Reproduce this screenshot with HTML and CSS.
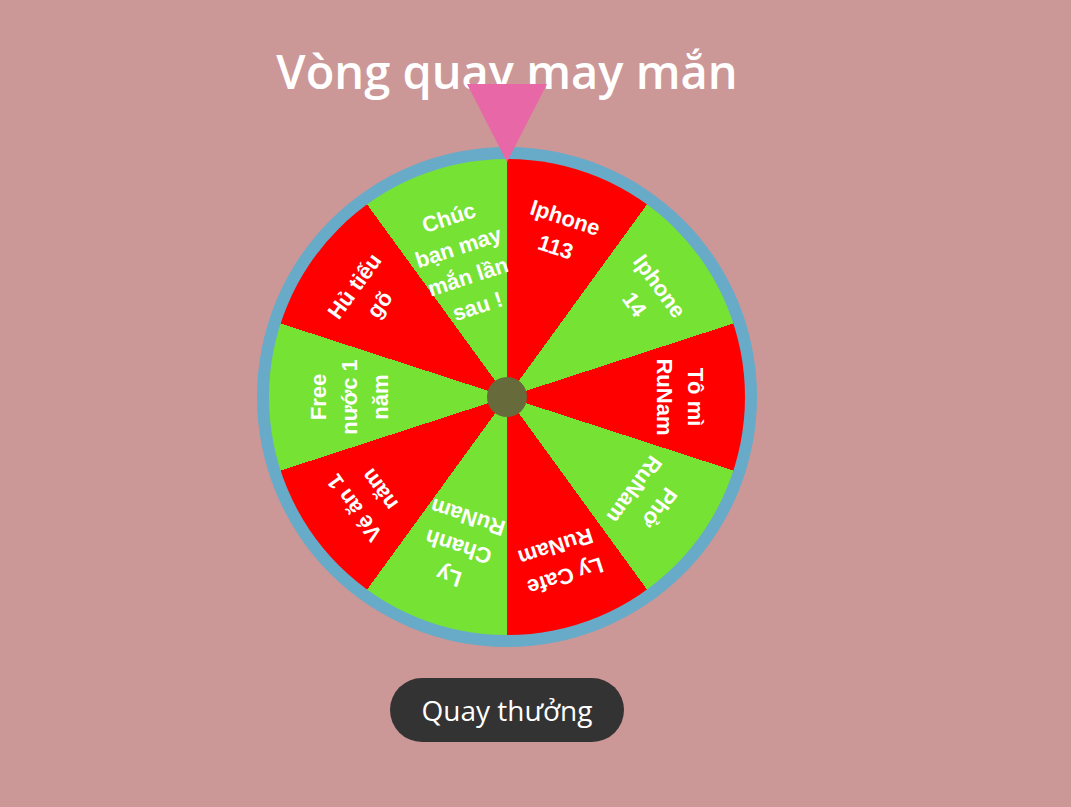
FILE: index.html
```html
<!DOCTYPE html>
<html lang="vi">
<head>
<meta charset="utf-8">
<title>Vòng quay may mắn</title>
<link rel="stylesheet" href="styles.css">
</head>
<body>
<main class="page">
  <h1 class="title">Vòng quay may mắn</h1>
  <div class="wheel-wrap">
    <div class="pointer"></div>
    <div class="wheel">
      <div class="label" style="--a:18deg">Iphone 113</div>
      <div class="label" style="--a:54deg">Iphone 14</div>
      <div class="label" style="--a:90deg">Tô mì RuNam</div>
      <div class="label" style="--a:126deg">Phở RuNam</div>
      <div class="label" style="--a:162deg">Ly Cafe RuNam</div>
      <div class="label" style="--a:198deg">Ly Chanh RuNam</div>
      <div class="label" style="--a:234deg">Vé ăn 1 năm</div>
      <div class="label" style="--a:270deg">Free nước 1 năm</div>
      <div class="label" style="--a:306deg">Hủ tiếu gõ</div>
      <div class="label" style="--a:342deg">Chúc bạn may mắn lần sau !</div>
      <div class="hub"></div>
    </div>
  </div>
  <button class="spin-btn" type="button">Quay thưởng</button>
</main>
</body>
</html>
```
FILE: styles.css
```css
html, body {
  margin: 0;
  padding: 0;
  background: #cc9797;
  min-height: 100%;
}

body {
  height: 807px;
  overflow: hidden;
}

.page {
  width: 1014px;
  display: flex;
  flex-direction: column;
  align-items: center;
}

.title {
  margin: 0 0 44px;
  padding-top: 39px;
  font-family: "Open Sans", "Noto Sans", sans-serif;
  font-weight: 600;
  font-size: 47px;
  line-height: 64px;
  color: #ffffff;
}

.wheel-wrap {
  position: relative;
  width: 500px;
  height: 500px;
  border-radius: 50%;
  background: #67abc8;
  padding: 12px;
  box-sizing: border-box;
}

.pointer {
  position: absolute;
  top: -63px;
  left: 50%;
  margin-left: -40px;
  width: 80px;
  height: 78px;
  background: #e867a7;
  clip-path: polygon(0 0, 100% 0, 50% 100%);
  z-index: 2;
}

.wheel {
  position: relative;
  width: 476px;
  height: 476px;
  border-radius: 50%;
  overflow: hidden;
  background: repeating-conic-gradient(from 0deg, #ff0000 0deg 36deg, #76e234 36deg 72deg);
}

.label {
  position: absolute;
  top: 0;
  left: 50%;
  width: 96px;
  margin-left: -48px;
  height: 238px;
  box-sizing: border-box;
  padding-top: 34px;
  transform-origin: 50% 100%;
  transform: rotate(var(--a));
  font-family: "Liberation Sans", Arial, sans-serif;
  font-weight: 700;
  font-size: 22px;
  line-height: 31px;
  color: #ffffff;
  text-align: center;
}

.hub {
  position: absolute;
  top: 50%;
  left: 50%;
  width: 40px;
  height: 40px;
  margin: -20px 0 0 -20px;
  border-radius: 50%;
  background: #676a3b;
}

.spin-btn {
  margin-top: 31px;
  width: 234px;
  height: 64px;
  border: none;
  border-radius: 32px;
  background: #333333;
  color: #ffffff;
  font-family: "Open Sans", "Noto Sans", sans-serif;
  font-size: 28px;
  padding: 0;
  cursor: pointer;
}
```
